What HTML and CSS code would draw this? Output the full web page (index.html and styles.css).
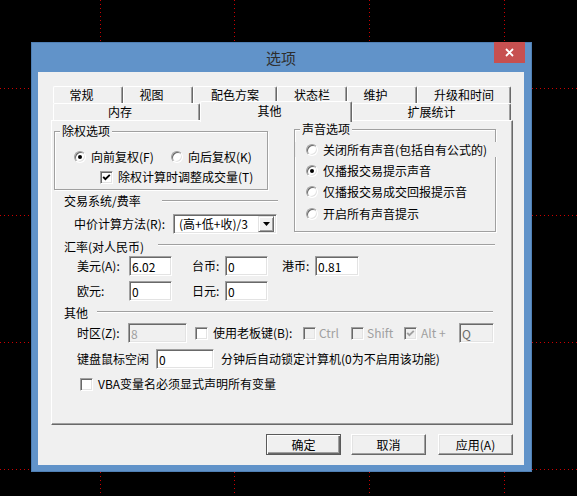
FILE: index.html
```html
<!DOCTYPE html>
<html lang="zh-CN">
<head>
    <meta charset="UTF-8">
    <title>选项</title>
    <link rel="stylesheet" href="styles.css">
</head>
<body>
<div class="dialog">
    <div class="titlebar">
        <span class="title">选项</span>
        <span class="close-btn">
            <svg width="9" height="9" viewBox="0 0 9 9"><path d="M1 1L8 8M8 1L1 8" stroke="#fff" stroke-width="1.8"/></svg>
        </span>
    </div>
    <div class="client">
        <div class="tab-row back">
            <div class="tab w70 pad">常规</div>
            <div class="tab w70 pad">视图</div>
            <div class="tab w84">配色方案</div>
            <div class="tab w70">状态栏</div>
            <div class="tab w70 pad">维护</div>
            <div class="tab w94">升级和时间</div>
        </div>
        <div class="tab-row front">
            <div class="tab w147 pad">内存</div>
            <div class="tab w152 pad active">其他</div>
            <div class="tab w159">扩展统计</div>
        </div>

        <div class="panel">
            <div class="top">
                <div class="left-col">
                    <div class="group rights">
                        <div class="group-title">除权选项</div>
                        <div class="opt-row radios">
                            <span class="opt fwd"><span class="radio checked"></span>向前复权(F)</span>
                            <span class="opt"><span class="radio"></span>向后复权(K)</span>
                        </div>
                        <div class="opt-row adjust">
                            <span class="check">
                                <svg width="9" height="9" viewBox="0 0 9 9"><polyline points="1.2,3.8 3.4,6.2 7.8,1.8" fill="none" stroke="#000" stroke-width="1.9"/></svg>
                            </span>
                            <span class="opt-text">除权计算时调整成交量(T)</span>
                        </div>
                    </div>
                    <div class="heading trade">
                        <span class="heading-label">交易系统/费率</span>
                        <span class="sep"></span>
                    </div>
                    <div class="field-row combo-row">
                        <span class="lbl lbl-mid">中价计算方法(R):</span>
                        <div class="combo">
                            <span class="combo-text">(高+低+收)/3</span>
                            <span class="drop">
                                <svg width="7" height="4" viewBox="0 0 7 4"><path d="M0 0H7L3.5 4Z" fill="#000"/></svg>
                            </span>
                        </div>
                    </div>
                </div>

                <div class="group sound">
                    <div class="group-title">声音选项</div>
                    <div class="opt-row snd first"><span class="radio"></span>关闭所有声音(包括自有公式的)</div>
                    <div class="opt-row snd"><span class="radio checked"></span>仅播报交易提示声音</div>
                    <div class="opt-row snd"><span class="radio"></span>仅播报交易成交回报提示音</div>
                    <div class="opt-row snd last"><span class="radio"></span>开启所有声音提示</div>
                </div>
            </div>

            <div class="heading rates">
                <span class="heading-label">汇率(对人民币)</span>
                <span class="sep"></span>
            </div>
            <div class="field-row usd">
                <span class="lbl lbl-cur">美元(A):</span>
                <input class="edit w43" type="text" value="6.02">
                <span class="lbl lbl-short gap20">台币:</span>
                <input class="edit w43" type="text" value="0">
                <span class="lbl lbl-short gap14">港币:</span>
                <input class="edit w44" type="text" value="0.81">
            </div>
            <div class="field-row eur">
                <span class="lbl lbl-cur">欧元:</span>
                <input class="edit w43" type="text" value="0">
                <span class="lbl lbl-short gap20">日元:</span>
                <input class="edit w43" type="text" value="0">
            </div>

            <div class="heading other">
                <span class="heading-label">其他</span>
                <span class="sep"></span>
            </div>
            <div class="field-row tz">
                <span class="lbl lbl-tz">时区(Z):</span>
                <input class="edit w59" type="text" value="8" disabled>
                <span class="check boss"></span>
                <span class="lbl lbl-boss">使用老板键(B):</span>
                <span class="check disabled"></span>
                <span class="lbl key ctrl">Ctrl</span>
                <span class="check disabled"></span>
                <span class="lbl key shift">Shift</span>
                <span class="check disabled">
                    <svg width="9" height="9" viewBox="0 0 9 9"><polyline points="1.2,3.8 3.4,6.2 7.8,1.8" fill="none" stroke="#a0a0a0" stroke-width="1.9"/></svg>
                </span>
                <span class="lbl key alt">Alt +</span>
                <input class="edit w35 hotkey" type="text" value="Q" disabled>
            </div>
            <div class="field-row idle">
                <span class="lbl lbl-idle">键盘鼠标空闲</span>
                <input class="edit w58" type="text" value="0">
                <span class="idle-note">分钟后自动锁定计算机(0为不启用该功能)</span>
            </div>
            <div class="opt-row vba">
                <span class="check"></span>
                <span class="opt-text">VBA变量名必须显式声明所有变量</span>
            </div>
        </div>

        <div class="buttons">
            <button class="btn default" type="button">确定</button>
            <button class="btn cancel" type="button">取消</button>
            <button class="btn apply" type="button">应用(A)</button>
        </div>
    </div>
</div>
</body>
</html>
```

FILE: styles.css
```css
body {
    margin: 0;
    height: 496px;
    box-sizing: border-box;
    padding: 42px 0 0 31px;
    background-color: #000;
    background-image:
        repeating-linear-gradient(to right, #c00 0 1px, transparent 1px 4px),
        repeating-linear-gradient(to right, #c00 0 1px, transparent 1px 4px),
        repeating-linear-gradient(to right, #c00 0 1px, transparent 1px 4px),
        repeating-linear-gradient(to right, #c00 0 1px, transparent 1px 4px),
        repeating-linear-gradient(to bottom, #c00 0 1px, transparent 1px 4px),
        repeating-linear-gradient(to bottom, #c00 0 1px, transparent 1px 4px),
        repeating-linear-gradient(to bottom, #c00 0 1px, transparent 1px 4px),
        repeating-linear-gradient(to bottom, #c00 0 1px, transparent 1px 4px);
    background-size: 100% 1px, 100% 1px, 100% 1px, 100% 1px, 1px 100%, 1px 100%, 1px 100%, 1px 100%;
    background-position: 0 88px, 0 215px, 0 342px, 0 469px, 100px 0, 234px 0, 369px 0, 504px 0;
    background-repeat: no-repeat;
    font-family: "Noto Sans CJK SC", "Noto Sans", sans-serif;
    font-size: 12px;
    line-height: 14px;
    color: #000;
}

/* window frame */
.dialog {
    width: 501px;
    height: 430px;
    box-sizing: border-box;
    background: #6193c9;
    border: 1px solid #4f7fb4;
    padding: 0 7px 6px 6px;
}
.titlebar {
    height: 29px;
    display: grid;
    grid-template-columns: 1fr auto 1fr;
    align-items: center;
}
.title {
    grid-column: 2;
    font-size: 15px;
    color: #2e2e2e;
    line-height: 18px;
}
.close-btn {
    grid-column: 3;
    justify-self: end;
    align-self: start;
    width: 31px;
    height: 21px;
    margin: -1px -1px 0 0;
    background: #c75050;
    display: flex;
    align-items: center;
    justify-content: center;
}
.client {
    height: 393px;
    box-sizing: border-box;
    background: #f0f0f0;
    padding: 14px 11px 0 13px;
}

/* tabs */
.tab-row {
    display: flex;
    align-items: flex-end;
    height: 17px;
    margin-left: 2px;
}
.tab {
    flex: none;
    box-sizing: border-box;
    height: 17px;
    border: 1px solid #fff;
    border-right-color: #696969;
    border-bottom: none;
    border-radius: 2px 2px 0 0;
    box-shadow: inset -1px 0 #a0a0a0;
    background: #f0f0f0;
    text-align: center;
    line-height: 16px;
}
.tab.pad { padding-right: 13px; }
.w70 { width: 70px; }
.w84 { width: 84px; }
.w94 { width: 94px; }
.w147 { width: 147px; }
.w152 { width: 152px; }
.w159 { width: 159px; }
.tab.active {
    height: 21px;
    margin-bottom: -2px;
    padding-top: 1px;
}

.panel {
    width: 462px;
    height: 305px;
    box-sizing: border-box;
    border: 1px solid;
    border-color: #fff #696969 #696969 #fff;
    box-shadow: inset -1px -1px #a0a0a0;
    padding: 8px 0 0 2px;
}

/* group boxes */
.top {
    display: flex;
    align-items: flex-start;
}
.left-col {
    width: 240px;
    margin-top: 2px;
}
.group {
    box-sizing: border-box;
    border: 1px solid #a0a0a0;
    box-shadow: inset 1px 1px #fff, 1px 1px #fff;
}
.group-title {
    width: fit-content;
    margin: -8px 0 0 5px;
    padding: 0 2px;
    background: #f0f0f0;
}
.rights {
    width: 214px;
    height: 59px;
}
.sound {
    width: 202px;
    height: 103px;
}

.opt-row {
    display: flex;
    align-items: center;
    height: 14px;
    white-space: nowrap;
}
.radios {
    margin-top: 12px;
    padding-left: 19px;
}
.opt {
    display: flex;
    align-items: center;
}
.opt.fwd { width: 97px; }
.adjust {
    margin-top: 6px;
    padding-left: 45px;
}
.opt-text { margin-left: 5px; }

.snd {
    padding-left: 11px;
    margin-top: 7px;
}
.snd.first {
    margin-top: 6px;
    margin-right: -4px;
    height: 15px;
    background: #f0f0f0;
}
.snd.last { margin-top: 8px; }

.radio {
    flex: none;
    width: 12px;
    height: 12px;
    box-sizing: border-box;
    border-radius: 50%;
    border: 1px solid;
    border-color: #a0a0a0 #fff #fff #a0a0a0;
    box-shadow: inset 1px 1px #696969, inset -1px -1px #e3e3e3;
    background: #fff;
    margin-right: 5px;
    display: flex;
    align-items: center;
    justify-content: center;
}
.radio.checked::after {
    content: "";
    width: 4px;
    height: 4px;
    border-radius: 50%;
    background: #000;
}

.check {
    flex: none;
    width: 13px;
    height: 13px;
    box-sizing: border-box;
    border: 1px solid;
    border-color: #a0a0a0 #fff #fff #a0a0a0;
    box-shadow: inset 1px 1px #696969, inset -1px -1px #e3e3e3;
    background: #fff;
    display: flex;
    align-items: center;
    justify-content: center;
}
.check.disabled { background: #f0f0f0; }

/* section headings with etched line */
.heading {
    display: flex;
    align-items: center;
    height: 14px;
    padding-left: 10px;
}
.heading-label {
    flex: none;
    white-space: nowrap;
}
.sep {
    flex: none;
    height: 0;
    border-top: 1px solid #a0a0a0;
    border-bottom: 1px solid #fff;
}
.trade { margin-top: 4px; }
.trade .heading-label { width: 98px; }
.trade .sep { width: 116px; }
.rates { margin-top: 6px; }
.rates .heading-label { width: 94px; }
.rates .sep { width: 337px; margin-bottom: 5px; }
.other { margin-top: 5px; }
.other .heading-label { width: 33px; }
.other .sep { width: 396px; margin-bottom: 2px; }

/* field rows */
.field-row {
    display: flex;
    align-items: center;
    height: 20px;
    padding-left: 23px;
    white-space: nowrap;
}
.lbl { flex: none; }
.combo-row {
    margin-top: 6px;
    padding-left: 20px;
}
.lbl-mid { width: 99px; }
.combo {
    flex: none;
    width: 104px;
    height: 20px;
    box-sizing: border-box;
    border: 1px solid;
    border-color: #a0a0a0 #fff #fff #a0a0a0;
    box-shadow: inset 1px 1px #696969, inset -1px -1px #e3e3e3;
    background: #fff;
    display: flex;
    align-items: center;
    padding: 2px 2px 2px 5px;
}
.combo-text { flex: 1; }
.drop {
    width: 16px;
    height: 16px;
    box-sizing: border-box;
    border: 1px solid;
    border-color: #e3e3e3 #696969 #696969 #e3e3e3;
    box-shadow: inset 1px 1px #fff, inset -1px -1px #a0a0a0;
    background: #f0f0f0;
    display: flex;
    align-items: center;
    justify-content: center;
}

.edit {
    flex: none;
    height: 20px;
    box-sizing: border-box;
    margin: 0;
    border: 1px solid;
    border-color: #a0a0a0 #fff #fff #a0a0a0;
    box-shadow: inset 1px 1px #696969, inset -1px -1px #e3e3e3;
    background: #fff;
    padding: 0 0 0 2px;
    font: inherit;
    color: #000;
    outline: none;
}
.edit:disabled {
    background: #f0f0f0;
    color: #a0a0a0;
}
.edit.hotkey:disabled { color: #6d6d6d; }
.w35 { width: 35px; }
.w43 { width: 43px; }
.w44 { width: 44px; }
.w58 { width: 58px; }
.w59 { width: 59px; }

.usd { margin-top: 2px; }
.eur { margin-top: 5px; }
.lbl-cur { width: 52px; }
.lbl-short { width: 33px; }
.gap20 { margin-left: 20px; }
.gap14 { margin-left: 14px; }

.tz { margin-top: 3px; }
.lbl-tz { width: 51px; }
.check.boss { margin-left: 8px; }
.lbl-boss {
    width: 90px;
    margin-left: 5px;
}
.key {
    color: #a0a0a0;
    margin-left: 3px;
}
.ctrl { width: 32px; }
.shift { width: 37px; }
.alt {
    width: 38px;
    margin-left: 4px;
}

.idle { margin-top: 6px; }
.lbl-idle { width: 79px; }
.idle-note { margin-left: 7px; }

.vba {
    margin-top: 8px;
    padding-left: 26px;
}

/* dialog buttons */
.buttons {
    display: flex;
    justify-content: flex-end;
    margin-top: 9px;
}
.btn {
    width: 75px;
    height: 21px;
    box-sizing: border-box;
    padding: 0;
    font: inherit;
    color: #000;
    background: #f0f0f0;
    border: 1px solid;
    border-color: #fff #696969 #696969 #fff;
    box-shadow: inset -1px -1px #a0a0a0, inset 1px 1px #e3e3e3;
}
.btn.default {
    border-color: #5a5a5a;
    box-shadow: inset 1px 1px #fff, inset -1px -1px #696969, inset -2px -2px #a0a0a0;
}
.btn.cancel { margin-left: 10px; }
.btn.apply { margin-left: 12px; }
```
